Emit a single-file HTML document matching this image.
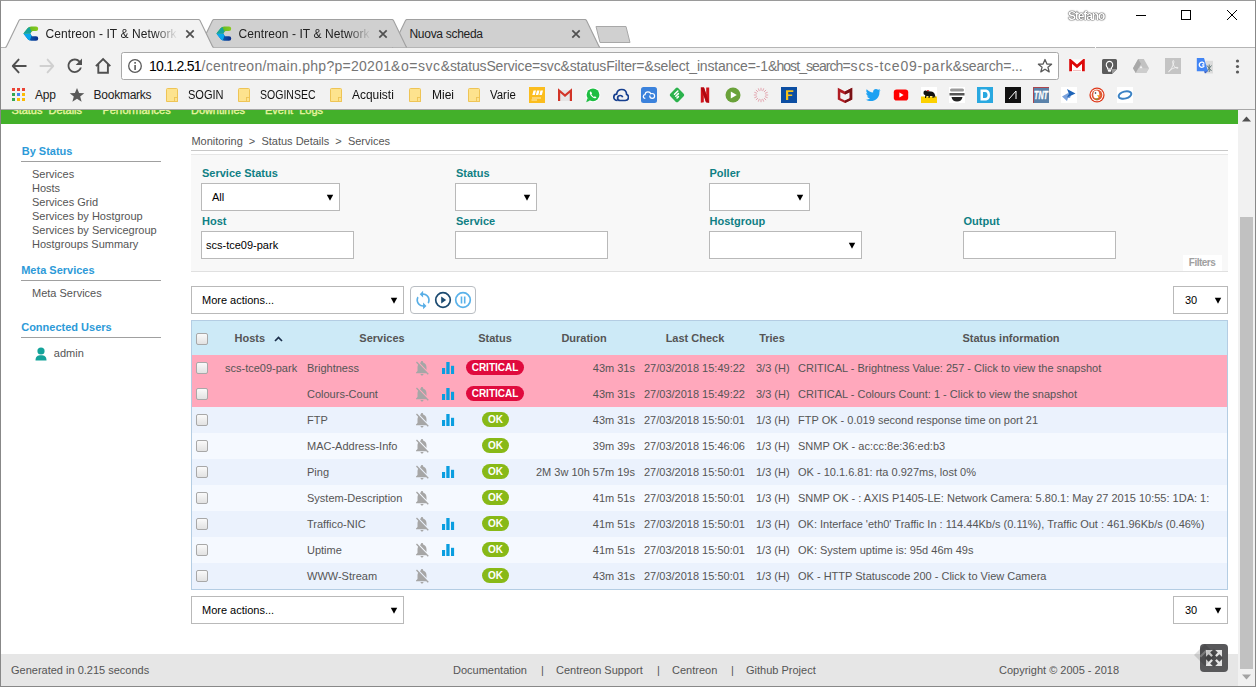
<!DOCTYPE html>
<html><head><meta charset="utf-8"><style>
*{margin:0;padding:0;box-sizing:border-box}
html,body{width:1256px;height:687px;overflow:hidden;background:#fff;font-family:"Liberation Sans",sans-serif}
.a{position:absolute;display:block}
.t{position:absolute;white-space:nowrap;line-height:1}
</style></head><body>
<div class="a" style="left:0px;top:0px;width:1256px;height:47px;background:#fff"></div>
<div class="a" style="left:0px;top:47px;width:1256px;height:63px;background:#f2f2f2"></div>
<div class="a" style="left:0px;top:109px;width:1256px;height:1px;background:#a8a8a8"></div>
<div class="a" style="left:0px;top:47px;width:1256px;height:1px;background:#b5b5b5"></div>
<div class="a" style="left:1095px;top:47px;width:1px;height:1px;background:#fff"></div>
<svg class="a" style="left:0px;top:19px;" width="700" height="30" viewBox="0 0 700 30"><polygon points="392.5,28 406,0.5 586,0.5 599.5,28" fill="#d0d0d0"/><path d="M392,28.2 Q392.8,28 393.2,27 L405.5,1.5 Q406,0.5 407,0.5 L585,0.5 Q586,0.5 586.5,1.5 L598.8,27 Q599.2,28 600,28.2" fill="none" stroke="#a0a0a0" stroke-width="1.1"/><polygon points="199.5,28 213,0.5 393,0.5 406.5,28" fill="#d0d0d0"/><path d="M199,28.2 Q199.8,28 200.2,27 L212.5,1.5 Q213,0.5 214,0.5 L392,0.5 Q393,0.5 393.5,1.5 L405.8,27 Q406.2,28 407,28.2" fill="none" stroke="#a0a0a0" stroke-width="1.1"/><polygon points="6.0,29 19.5,0.5 199.5,0.5 213.0,29" fill="#f2f2f2"/><path d="M5.5,28.2 Q6.300000000000001,28 6.699999999999999,27 L19.0,1.5 Q19.5,0.5 20.5,0.5 L198.5,0.5 Q199.5,0.5 200.0,1.5 L212.3,27 Q212.7,28 213.5,28.2" fill="none" stroke="#a0a0a0" stroke-width="1.1"/><polygon points="596,7.5 626,7.5 630,23.5 600,23.5" fill="#d0d0d0" stroke="#a8a8a8" stroke-width="1" stroke-linejoin="round"/></svg>
<svg class="a" style="left:23px;top:26px;" width="16" height="16" viewBox="0 0 16 16"><defs><clipPath id="cc1"><path d="M0.4 7.6 L4.6 2.2 Q6 0.6 8.2 0.6 L13 0.6 A2.2 2.2 0 0 1 13 5 L10 5 Q9 5 8.4 5.9 L7.4 7.6 L8.4 9.4 Q9 10.3 10 10.3 L13 10.3 A2.25 2.25 0 0 1 13 14.8 L8.2 14.8 Q6 14.8 4.6 13.1 Z"/></clipPath></defs><g clip-path="url(#cc1)"><defs><linearGradient id="cc1g" x1="0" x2="1"><stop offset="0" stop-color="#49b02a"/><stop offset="1" stop-color="#8fcb1a"/></linearGradient><linearGradient id="cc1b" x1="0" x2="1"><stop offset="0" stop-color="#0a78c8"/><stop offset="1" stop-color="#0b2a88"/></linearGradient></defs><rect x="0" y="7.6" width="16" height="9" fill="url(#cc1b)"/><path d="M0 7.6 H16 V0 H0 Z" fill="url(#cc1g)"/><path d="M0 7.6 L7.4 7.6 L8.6 9.6 L6.2 16 L0 16 Z" fill="#08a8ee"/><path d="M0 7.6 L7.4 7.6 L8.6 5.6 L5.8 0 L0 0 Z" fill="#14a39c"/></g></svg>
<svg class="a" style="left:216px;top:26px;" width="16" height="16" viewBox="0 0 16 16"><defs><clipPath id="cc2"><path d="M0.4 7.6 L4.6 2.2 Q6 0.6 8.2 0.6 L13 0.6 A2.2 2.2 0 0 1 13 5 L10 5 Q9 5 8.4 5.9 L7.4 7.6 L8.4 9.4 Q9 10.3 10 10.3 L13 10.3 A2.25 2.25 0 0 1 13 14.8 L8.2 14.8 Q6 14.8 4.6 13.1 Z"/></clipPath></defs><g clip-path="url(#cc2)"><defs><linearGradient id="cc2g" x1="0" x2="1"><stop offset="0" stop-color="#49b02a"/><stop offset="1" stop-color="#8fcb1a"/></linearGradient><linearGradient id="cc2b" x1="0" x2="1"><stop offset="0" stop-color="#0a78c8"/><stop offset="1" stop-color="#0b2a88"/></linearGradient></defs><rect x="0" y="7.6" width="16" height="9" fill="url(#cc2b)"/><path d="M0 7.6 H16 V0 H0 Z" fill="url(#cc2g)"/><path d="M0 7.6 L7.4 7.6 L8.6 9.6 L6.2 16 L0 16 Z" fill="#08a8ee"/><path d="M0 7.6 L7.4 7.6 L8.6 5.6 L5.8 0 L0 0 Z" fill="#14a39c"/></g></svg>
<div class="t " style="left:45.5px;top:28.34px;font-size:12px;color:#222;font-weight:normal;width:132px;overflow:hidden;-webkit-mask-image:linear-gradient(90deg,#000 82%,transparent);letter-spacing:0.084px;">Centreon - IT &amp; Network</div>
<div class="t " style="left:238.5px;top:28.34px;font-size:12px;color:#222;font-weight:normal;width:132px;overflow:hidden;-webkit-mask-image:linear-gradient(90deg,#000 82%,transparent);letter-spacing:0.084px;">Centreon - IT &amp; Network</div>
<div class="t " style="left:409.5px;top:28.34px;font-size:12px;color:#222;font-weight:normal;letter-spacing:-0.292px;">Nuova scheda</div>
<svg class="a" style="left:184px;top:28px;" width="12" height="12" viewBox="0 0 12 12"><path d="M2.3 2.3 L9.7 9.7 M9.7 2.3 L2.3 9.7" stroke="#505050" stroke-width="1.7"/></svg>
<svg class="a" style="left:377px;top:28px;" width="12" height="12" viewBox="0 0 12 12"><path d="M2.3 2.3 L9.7 9.7 M9.7 2.3 L2.3 9.7" stroke="#505050" stroke-width="1.7"/></svg>
<svg class="a" style="left:570px;top:28px;" width="12" height="12" viewBox="0 0 12 12"><path d="M2.3 2.3 L9.7 9.7 M9.7 2.3 L2.3 9.7" stroke="#505050" stroke-width="1.7"/></svg>
<div class="t " style="left:1067.6px;top:10.24px;font-size:12px;color:#fff;font-weight:bold;text-shadow:0 0 1.5px #111,0 0 1px #333;will-change:transform;letter-spacing:-1.117px;">Stefano</div>
<div class="a" style="left:1136px;top:15px;width:10px;height:1px;background:#000"></div>
<div class="a" style="left:1181px;top:10px;width:10px;height:10px;border:1px solid #000"></div>
<svg class="a" style="left:1226px;top:9px;" width="12" height="12" viewBox="0 0 12 12"><path d="M1 1 L11 11 M11 1 L1 11" stroke="#000" stroke-width="1"/></svg>
<svg class="a" style="left:11px;top:58px;" width="16" height="16" viewBox="0 0 16 16"><path d="M14.8 8 H2 M7.6 1.6 L1.8 8 L7.6 14.4" fill="none" stroke="#505050" stroke-width="1.9" stroke-linecap="round" stroke-linejoin="round"/></svg>
<svg class="a" style="left:39px;top:58px;" width="16" height="16" viewBox="0 0 16 16"><path d="M1.4 8 H14 M8.6 1.6 L14.2 8 L8.6 14.4" fill="none" stroke="#d0d0d0" stroke-width="1.9" stroke-linecap="round" stroke-linejoin="round"/></svg>
<svg class="a" style="left:64.4px;top:55.3px" width="21.6" height="21.6" viewBox="0 0 24 24"><path fill="#505050" d="M17.65 6.35C16.2 4.9 14.21 4 12 4c-4.42 0-7.99 3.58-7.99 8s3.57 8 7.99 8c3.73 0 6.84-2.55 7.730-6h-2.08c-.82 2.33-3.04 4-5.65 4-3.310 0-6-2.69-6-6s2.69-6 6-6c1.66 0 3.14.69 4.220 1.78L13 11h7V4l-2.35 2.35z"/></svg>
<svg class="a" style="left:95px;top:57px;" width="17" height="17" viewBox="0 0 17 17"><path d="M0.9 9.2 L8.1 2 L15.3 9.2 M3.3 7 V15.7 H12.9 V7" fill="none" stroke="#505050" stroke-width="1.9"/></svg>
<div class="a" style="left:121px;top:52px;width:938px;height:28px;background:#fff;border:1px solid #a8a8a8;border-radius:2.5px"></div>
<svg class="a" style="left:127px;top:58px;" width="16" height="16" viewBox="0 0 16 16"><circle cx="8" cy="8" r="6.3" fill="none" stroke="#5a5a5a" stroke-width="1.3"/><rect x="7.3" y="7" width="1.6" height="5" fill="#5a5a5a"/><rect x="7.3" y="4" width="1.6" height="1.7" fill="#5a5a5a"/></svg>
<div class="t " style="left:149px;top:59.15px;font-size:14px;color:#000;font-weight:normal;letter-spacing:-0.723px;">10.1.2.51</div>
<div class="t " style="left:201.6px;top:59.15px;font-size:14px;color:#757575;font-weight:normal;letter-spacing:0.275px;">/centreon/main.php?p=20201</div>
<div class="t " style="left:391px;top:59.15px;font-size:14px;color:#757575;font-weight:normal;letter-spacing:0.560px;">&amp;o=svc&amp;</div>
<div class="t " style="left:450px;top:59.15px;font-size:14px;color:#757575;font-weight:normal;letter-spacing:-0.156px;">statusService=svc&amp;statusFilter=</div>
<div class="t " style="left:644.5px;top:59.15px;font-size:14px;color:#757575;font-weight:normal;letter-spacing:-0.165px;">&amp;select_instance=-1</div>
<div class="t " style="left:768px;top:59.15px;font-size:14px;color:#757575;font-weight:normal;letter-spacing:-0.932px;">&amp;host_search=</div>
<div class="t " style="left:850.6px;top:59.15px;font-size:14px;color:#757575;font-weight:normal;letter-spacing:0.784px;">scs-tce09-park</div>
<div class="t " style="left:952.7px;top:59.15px;font-size:14px;color:#757575;font-weight:normal;letter-spacing:-0.120px;">&amp;search=...</div>
<svg class="a" style="left:1037px;top:58px;" width="16" height="16" viewBox="0 0 16 16"><path d="M8 1.5 L9.9 6 L14.6 6.2 L10.9 9.2 L12.2 13.9 L8 11.2 L3.8 13.9 L5.1 9.2 L1.4 6.2 L6.1 6 Z" fill="none" stroke="#5a5a5a" stroke-width="1.3" stroke-linejoin="round"/></svg>
<svg class="a" style="left:1069px;top:59px;" width="16" height="13" viewBox="0 0 16 13"><rect x="1" y="0.5" width="14" height="12" fill="#fff"/><path d="M1.6 12.3 V1.8 L8 7.3 L14.4 1.8 V12.3" fill="none" stroke="#dd0a0a" stroke-width="2.8" stroke-linejoin="miter"/><path d="M4 11.5 H12" stroke="#f0b0b0" stroke-width="0.8"/></svg>
<svg class="a" style="left:1102px;top:59px;" width="15" height="15" viewBox="0 0 15 15"><path d="M1.5 0 H13.5 A1.5 1.5 0 0 1 15 1.5 V10 L10 15 H1.5 A1.5 1.5 0 0 1 0 13.5 V1.5 A1.5 1.5 0 0 1 1.5 0 Z" fill="#5c5c5c"/><path d="M10 15 V10 H15 Z" fill="#9a9a9a"/><path d="M5.6 8.6 C4 7.5 3.8 4.8 5.2 3.3 C6.4 2 8.6 2 9.8 3.3 C11.2 4.8 11 7.5 9.4 8.6 V10 H5.6 Z" fill="none" stroke="#fff" stroke-width="1.1"/><rect x="5.8" y="10.6" width="3.4" height="2.2" rx="1" fill="#fff"/></svg>
<svg class="a" style="left:1133px;top:59px;" width="16" height="14" viewBox="0 0 16 14"><path d="M5.2 0 H10.8 L16 9.2 L13.2 14 H2.8 L0 9.2 Z" fill="#c2c2c2"/><path d="M5.2 0 L8 4.8 L2.8 14 L0 9.2 Z" fill="#a8a8a8"/><path d="M2.8 14 L5.6 9.2 H16 L13.2 14 Z" fill="#cdcdcd"/><path d="M8 6.5 L9.6 9.2 H6.4 Z" fill="#f2f2f2"/></svg>
<svg class="a" style="left:1165px;top:58px;" width="16" height="16" viewBox="0 0 16 16"><rect width="16" height="16" fill="#c4c4c4"/><path d="M8.3 2.5 C7.6 2.5 7.5 3.5 7.8 5 C8.3 7.5 10 10 12.5 10.3 C13.6 10.4 13.3 9.2 12 9.3 C9.5 9.5 6 11 4 13 C3.2 13.8 3.6 14.2 4.3 13.5 C6 11.5 8 8 8.8 4.5 C9 3.2 8.8 2.5 8.3 2.5 Z" fill="none" stroke="#f0f0f0" stroke-width="0.9"/></svg>
<svg class="a" style="left:1196px;top:58px;" width="18" height="16" viewBox="0 0 18 16"><rect x="9.5" y="2.8" width="7.5" height="12.7" fill="#dcdcdc"/><path d="M11 7.5 L15.5 13 M15.5 7.5 L11 13 M13.2 6.5 V14" stroke="#607878" stroke-width="1"/><path d="M0.8 0 H8 L12 13.2 H0.8 Z" fill="#4285f4"/><path d="M8 13.2 H12 L9 15.6 Z" fill="#2a56c6"/><path d="M8.2 5.6 A2.6 2.6 0 1 0 8.2 7.8 M6 6.8 H8.4" fill="none" stroke="#fff" stroke-width="1.3"/></svg>
<svg class="a" style="left:1235px;top:59px;" width="5" height="15" viewBox="0 0 5 15"><circle cx="2.5" cy="2" r="1.6" fill="#5a5a5a"/><circle cx="2.5" cy="7.5" r="1.6" fill="#5a5a5a"/><circle cx="2.5" cy="13" r="1.6" fill="#5a5a5a"/></svg>
<svg class="a" style="left:12px;top:88px;" width="14" height="14" viewBox="0 0 14 14"><rect x="0" y="0" width="3" height="3" fill="#ea4335"/><rect x="5" y="0" width="3" height="3" fill="#ea4335"/><rect x="10" y="0" width="3" height="3" fill="#ea4335"/><rect x="0" y="5" width="3" height="3" fill="#34a853"/><rect x="5" y="5" width="3" height="3" fill="#4285f4"/><rect x="10" y="5" width="3" height="3" fill="#fbbc05"/><rect x="0" y="10" width="3" height="3" fill="#34a853"/><rect x="5" y="10" width="3" height="3" fill="#fbbc05"/><rect x="10" y="10" width="3" height="3" fill="#fbbc05"/></svg>
<div class="t " style="left:35px;top:89.34px;font-size:12px;color:#222;font-weight:normal;letter-spacing:-0.176px;">App</div>
<svg class="a" style="left:69px;top:87px;" width="16" height="16" viewBox="0 0 16 16"><path d="M8 1 L10.1 6 L15.3 6.2 L11.2 9.5 L12.6 14.7 L8 11.8 L3.4 14.7 L4.8 9.5 L0.7 6.2 L5.9 6 Z" fill="#5a5a5a"/></svg>
<div class="t " style="left:93.6px;top:89.34px;font-size:12px;color:#222;font-weight:normal;letter-spacing:-0.252px;">Bookmarks</div>
<svg class="a" style="left:166px;top:88px;" width="13" height="14" viewBox="0 0 13 14"><path d="M0.5 1.5 Q0.5 0.5 1.5 0.5 H10.5 Q11.5 0.5 11.5 1.5 V13.5 H0.5 Z" fill="#fde38e" stroke="#eec455" stroke-width="1"/><rect x="8.5" y="9.5" width="3" height="4" fill="#fde38e" stroke="#eec455" stroke-width="0.9"/></svg>
<div class="t " style="left:187.8px;top:89.34px;font-size:12px;color:#111;font-weight:normal;transform:scaleX(0.9205);transform-origin:0 0;">SOGIN</div>
<svg class="a" style="left:238px;top:88px;" width="13" height="14" viewBox="0 0 13 14"><path d="M0.5 1.5 Q0.5 0.5 1.5 0.5 H10.5 Q11.5 0.5 11.5 1.5 V13.5 H0.5 Z" fill="#fde38e" stroke="#eec455" stroke-width="1"/><rect x="8.5" y="9.5" width="3" height="4" fill="#fde38e" stroke="#eec455" stroke-width="0.9"/></svg>
<div class="t " style="left:260px;top:89.34px;font-size:12px;color:#111;font-weight:normal;transform:scaleX(0.8777);transform-origin:0 0;">SOGINSEC</div>
<svg class="a" style="left:330px;top:88px;" width="13" height="14" viewBox="0 0 13 14"><path d="M0.5 1.5 Q0.5 0.5 1.5 0.5 H10.5 Q11.5 0.5 11.5 1.5 V13.5 H0.5 Z" fill="#fde38e" stroke="#eec455" stroke-width="1"/><rect x="8.5" y="9.5" width="3" height="4" fill="#fde38e" stroke="#eec455" stroke-width="0.9"/></svg>
<div class="t " style="left:352.1px;top:89.34px;font-size:12px;color:#111;font-weight:normal;transform:scaleX(0.9948);transform-origin:0 0;">Acquisti</div>
<svg class="a" style="left:409px;top:88px;" width="13" height="14" viewBox="0 0 13 14"><path d="M0.5 1.5 Q0.5 0.5 1.5 0.5 H10.5 Q11.5 0.5 11.5 1.5 V13.5 H0.5 Z" fill="#fde38e" stroke="#eec455" stroke-width="1"/><rect x="8.5" y="9.5" width="3" height="4" fill="#fde38e" stroke="#eec455" stroke-width="0.9"/></svg>
<div class="t " style="left:431.7px;top:89.34px;font-size:12px;color:#111;font-weight:normal;transform:scaleX(0.9999);transform-origin:0 0;">Miei</div>
<svg class="a" style="left:468px;top:88px;" width="13" height="14" viewBox="0 0 13 14"><path d="M0.5 1.5 Q0.5 0.5 1.5 0.5 H10.5 Q11.5 0.5 11.5 1.5 V13.5 H0.5 Z" fill="#fde38e" stroke="#eec455" stroke-width="1"/><rect x="8.5" y="9.5" width="3" height="4" fill="#fde38e" stroke="#eec455" stroke-width="0.9"/></svg>
<div class="t " style="left:490.2px;top:89.34px;font-size:12px;color:#111;font-weight:normal;transform:scaleX(0.9512);transform-origin:0 0;">Varie</div>
<svg class="a" style="left:529px;top:87px;" width="16" height="16" viewBox="0 0 16 16"><rect width="16" height="16" fill="#fbbd1e"/><path d="M4.5 3.5 H7 L5.8 8 H3.3 Z M8 3.5 H10.5 L9.3 8 H6.8 Z M11.5 3.5 H14 L12.8 8 H10.3 Z" fill="#fff"/><path d="M3 11 H12 M2.5 13 H8" stroke="#fff" stroke-width="0.9" opacity="0.8"/></svg>
<svg class="a" style="left:557px;top:87px;" width="16" height="16" viewBox="0 0 16 16"><rect x="1" y="3" width="14" height="11" fill="#e6e6e6"/><path d="M2.1 14 V3.5 L8 8.5 L13.9 3.5 V14" fill="none" stroke="#d23427" stroke-width="2.2"/></svg>
<svg class="a" style="left:585px;top:87px;" width="16" height="16" viewBox="0 0 16 16"><circle cx="8" cy="7.8" r="7.4" fill="#fff"/><circle cx="8" cy="7.8" r="6.4" fill="#1ebe42"/><path d="M1.2 15.2 L2.6 11 L5 13.6 Z" fill="#1ebe42"/><path d="M5.2 4.6 C4.6 5.2 4.6 6.6 5.6 8.2 C6.6 9.8 8.4 11 9.8 11.2 C10.6 11.3 11.3 10.8 11.4 10.2 L9.8 9.2 L9 9.9 C8 9.5 6.8 8.4 6.4 7.3 L7.1 6.5 L6.2 4.7 Z" fill="#fff"/></svg>
<svg class="a" style="left:613px;top:87px;" width="16" height="16" viewBox="0 0 16 16"><path d="M4.5 13.5 C2 13.5 0.8 11.8 0.8 10.2 C0.8 8.5 2 7.3 3.6 7.2 C4 4.2 6.2 2.5 8.8 2.5 C11.6 2.5 13.5 4.6 13.6 7.4 C15 7.8 15.5 9 15.5 10.3 C15.5 12 14.2 13.5 12.2 13.5 H7.2 C5.6 13.5 4.6 12.4 4.6 11 C4.6 9.6 5.8 8.5 7.2 8.5 C8.4 8.5 9.4 9.3 9.7 10.3" fill="none" stroke="#163f8f" stroke-width="1.7"/></svg>
<svg class="a" style="left:641px;top:87px;" width="16" height="16" viewBox="0 0 16 16"><rect width="16" height="16" rx="2.5" fill="#3b82dc"/><path d="M4.3 11.3 C2.8 11.3 2.3 10.2 2.3 9.5 C2.3 8.5 3 7.8 4 7.7 C4.2 5.8 5.5 4.8 7 4.8 C8.4 4.8 9.4 5.6 9.8 6.8 C10.2 6.6 10.6 6.5 11 6.5 C12.4 6.5 13.6 7.6 13.6 9 C13.6 10.3 12.5 11.3 11.2 11.3 C9.8 11.3 8.8 10.2 8.8 9 V8.5" fill="none" stroke="#fff" stroke-width="1.2"/></svg>
<svg class="a" style="left:669px;top:87px;" width="16" height="16" viewBox="0 0 16 16"><path d="M8 0.6 Q8.6 0.6 9.1 1.1 L14.9 6.9 Q15.5 8 14.9 9.1 L9.1 14.9 Q8 15.6 6.9 14.9 L1.1 9.1 Q0.4 8 1.1 6.9 L6.9 1.1 Q7.4 0.6 8 0.6 Z" fill="#2bb24c"/><path d="M5.5 7.3 L8.8 4 M6.8 9.2 L9.4 6.6 M8 11 L9.4 9.6" stroke="#fff" stroke-width="1.5" stroke-linecap="round"/></svg>
<svg class="a" style="left:697px;top:87px;" width="16" height="16" viewBox="0 0 16 16"><path d="M3.8 0.5 H7 L9.2 7.5 V0.5 H12.2 V15.8 L9 15.2 L6.8 8.2 V15.2 L3.8 15.8 Z" fill="#d0121b"/><path d="M3.8 0.5 H7 L12.2 15.8 L9 15.2 Z" fill="#b00710"/></svg>
<svg class="a" style="left:725px;top:87px;" width="16" height="16" viewBox="0 0 16 16"><circle cx="8" cy="8" r="7.5" fill="#6aa23a"/><path d="M5.8 4.6 L11.8 8 L5.8 11.4 Z" fill="#fff"/></svg>
<svg class="a" style="left:753px;top:87px;" width="16" height="16" viewBox="0 0 16 16"><g stroke="#d87080" stroke-width="0.8" opacity="0.75"><path d="M12.20 8.00 L15.20 8.00"/><path d="M11.88 9.61 L14.65 10.76"/><path d="M10.97 10.97 L13.09 13.09"/><path d="M9.61 11.88 L10.76 14.65"/><path d="M8.00 12.20 L8.00 15.20"/><path d="M6.39 11.88 L5.24 14.65"/><path d="M5.03 10.97 L2.91 13.09"/><path d="M4.12 9.61 L1.35 10.76"/><path d="M3.80 8.00 L0.80 8.00"/><path d="M4.12 6.39 L1.35 5.24"/><path d="M5.03 5.03 L2.91 2.91"/><path d="M6.39 4.12 L5.24 1.35"/><path d="M8.00 3.80 L8.00 0.80"/><path d="M9.61 4.12 L10.76 1.35"/><path d="M10.97 5.03 L13.09 2.91"/><path d="M11.88 6.39 L14.65 5.24"/></g></svg>
<svg class="a" style="left:781px;top:87px;" width="16" height="16" viewBox="0 0 16 16"><rect width="16" height="16" fill="#0c4ea2"/><path d="M5 3.2 H12.3 V5 H7.2 V7.4 H11.2 V9.1 H7.2 V13 H5 Z" fill="#f7c21a"/></svg>
<svg class="a" style="left:837px;top:87px;" width="16" height="16" viewBox="0 0 16 16"><path fill-rule="evenodd" d="M0.8 0.8 L8 4.6 L15.2 0.8 V12.6 L8 16 L0.8 12.6 Z M3.3 5.2 V11.2 L8 13.4 L12.7 11.2 V5.2 L8 7.6 Z" fill="#b01c22"/><path fill-rule="evenodd" d="M8 4.6 L15.2 0.8 V12.6 L8 16 V13.4 L12.7 11.2 V5.2 L8 7.6 Z" fill="#7a1216"/></svg>
<svg class="a" style="left:865px;top:87px;" width="16" height="16" viewBox="0 0 16 16"><path d="M15.5 3.2 C15 3.5 14.3 3.6 13.8 3.7 C14.4 3.3 14.8 2.8 15 2.1 C14.4 2.5 13.8 2.7 13.1 2.8 C11.9 1.5 9.8 1.6 8.7 3 C8.1 3.8 8 4.8 8.2 5.6 C5.6 5.5 3.4 4.3 1.7 2.3 C0.9 3.7 1.3 5.5 2.6 6.4 C2.1 6.4 1.6 6.2 1.2 6 C1.2 7.5 2.2 8.8 3.6 9.1 C3.2 9.3 2.7 9.3 2.2 9.2 C2.6 10.5 3.8 11.3 5.2 11.3 C4 12.3 2.3 12.8 0.6 12.6 C7 16.5 15 12.5 14.4 4.6 C14.9 4.2 15.3 3.7 15.5 3.2 Z" fill="#1da1f2"/></svg>
<svg class="a" style="left:893px;top:87px;" width="16" height="16" viewBox="0 0 16 16"><rect x="0.8" y="2.5" width="14.4" height="11" rx="2.8" fill="#f00"/><path d="M6.4 5.4 L10.6 8 L6.4 10.6 Z" fill="#fff"/></svg>
<svg class="a" style="left:921px;top:87px;" width="16" height="16" viewBox="0 0 16 16"><rect width="16" height="16" fill="#fff"/><rect y="9.5" width="16" height="6.5" fill="#fcd100"/><path d="M2.5 6 C2.5 3.5 4.5 3 5.5 4 L10 4.5 C12 4.5 13.5 6 14 8 L14.5 10.5 L13.5 10.5 L13 9 L12.5 11 L11.5 11 L11.5 9 L9 9 L8.5 11 L7.5 11 L7.5 9 L5.5 9 L5 11 L4 11 L4.2 8 C3 8 2.5 7 2.5 6 Z" fill="#111"/><path d="M5.5 3.5 C6.5 2.5 8 2.8 8.5 3.8 L6 4.2 Z" fill="#e02020"/></svg>
<svg class="a" style="left:949px;top:87px;" width="16" height="16" viewBox="0 0 16 16"><rect width="16" height="16" fill="#fff"/><rect x="1" y="1.5" width="14" height="3" rx="1.5" fill="#999"/><rect x="0.5" y="6" width="15" height="2.5" fill="#555"/><path d="M2.5 10 H13.5 C13 13 11 14.5 8 14.5 C5 14.5 3 13 2.5 10 Z" fill="#222"/></svg>
<svg class="a" style="left:977px;top:87px;" width="16" height="16" viewBox="0 0 16 16"><rect width="16" height="16" fill="#fff"/><rect x="0" y="0" width="16" height="16" fill="#29a8e0"/><path d="M3.5 2.5 H8 C12 2.5 13 5 13 8 C13 11 12 13.5 8 13.5 H3.5 Z M6 5 V11 H8 C10 11 10.5 9.5 10.5 8 C10.5 6.5 10 5 8 5 Z" fill="#fff" fill-rule="evenodd"/></svg>
<svg class="a" style="left:1005px;top:87px;" width="16" height="16" viewBox="0 0 16 16"><rect width="16" height="16" fill="#111"/><path d="M4 12 L11 4 V12" fill="none" stroke="#fff" stroke-width="1"/></svg>
<svg class="a" style="left:1033px;top:87px;" width="16" height="16" viewBox="0 0 16 16"><rect x="0" y="0" width="16" height="16" fill="#5a82aa"/><path d="M0.4 16 V0.4 H16" fill="none" stroke="#c03838" stroke-width="0.9"/><text x="1" y="12.3" font-size="10" font-weight="bold" font-style="italic" fill="#fff" stroke="#fff" stroke-width="0.3" font-family="Liberation Sans" textLength="14" lengthAdjust="spacingAndGlyphs">TNT</text></svg>
<svg class="a" style="left:1061px;top:87px;" width="16" height="16" viewBox="0 0 16 16"><rect width="16" height="16" fill="#fff"/><path d="M1 9.5 L8 5.5 L7 8.5 L10 8.5 L9 11 L7 11 L6 14 Z" fill="#7aa2dc"/><path d="M6 2 L14.5 6.5 L6 10.5 L7.8 6.5 Z" fill="#1e64b8"/></svg>
<svg class="a" style="left:1089px;top:87px;" width="16" height="16" viewBox="0 0 16 16"><circle cx="8" cy="8" r="7.6" fill="#de3a1c"/><circle cx="8" cy="8" r="6.3" fill="#fff"/><circle cx="8" cy="8" r="5.4" fill="#de5833"/><ellipse cx="7.3" cy="7.5" rx="3" ry="4" fill="#fff"/><circle cx="6.5" cy="6" r="0.8" fill="#222"/><path d="M8 8 L12 8.5 L9.5 10.5 Z" fill="#f5a623"/><path d="M6 11.5 L9.5 11.5 L8 13 Z" fill="#5cb02a"/></svg>
<svg class="a" style="left:1117px;top:87px;" width="16" height="16" viewBox="0 0 16 16"><rect width="16" height="16" fill="#fff"/><ellipse cx="8" cy="8" rx="6.5" ry="3.5" fill="none" stroke="#3b82c4" stroke-width="2" transform="rotate(-15 8 8)"/></svg>
<div class="a" style="left:0px;top:110px;width:1238px;height:14px;background:#43b02a"></div>
<div class="a" style="left:0;top:110px;width:1238px;height:14px;overflow:hidden">
<div class="t" style="left:11.4px;top:-5.31px;font-size:11px;color:#e8f5a0;-webkit-text-stroke:0.35px #e8f5a0;letter-spacing:-0.023px">Status&nbsp; Details</div>
<div class="t" style="left:102.4px;top:-5.31px;font-size:11px;color:#e8f5a0;-webkit-text-stroke:0.35px #e8f5a0;letter-spacing:-0.015px">Performances</div>
<div class="t" style="left:191px;top:-5.31px;font-size:11px;color:#e8f5a0;-webkit-text-stroke:0.35px #e8f5a0;letter-spacing:-0.050px">Downtimes</div>
<div class="t" style="left:265px;top:-5.31px;font-size:11px;color:#e8f5a0;-webkit-text-stroke:0.35px #e8f5a0;letter-spacing:-0.009px">Event&nbsp; Logs</div>
</div>
<div class="a" style="left:1238px;top:110px;width:17px;height:576px;background:#f1f1f1"></div>
<div class="a" style="left:1240px;top:217px;width:13px;height:452px;background:#c1c1c1"></div>
<svg class="a" style="left:1241px;top:115px;" width="11" height="8" viewBox="0 0 11 8"><path d="M1 6.5 L5.5 1.5 L10 6.5 Z" fill="#505050"/></svg>
<svg class="a" style="left:1241px;top:673px;" width="11" height="8" viewBox="0 0 11 8"><path d="M1 1.5 L5.5 6.5 L10 1.5 Z" fill="#a3a3a3"/></svg>
<div class="t " style="left:21.7px;top:145.99px;font-size:11px;color:#2d9ad8;font-weight:bold;">By Status</div>
<div class="a" style="left:21px;top:161px;width:140px;height:1px;background:#a0a0a0"></div>
<div class="t " style="left:32px;top:168.69px;font-size:11px;color:#555;font-weight:normal;">Services</div>
<div class="t " style="left:32px;top:182.69px;font-size:11px;color:#555;font-weight:normal;">Hosts</div>
<div class="t " style="left:32px;top:196.69px;font-size:11px;color:#555;font-weight:normal;">Services Grid</div>
<div class="t " style="left:32px;top:210.69px;font-size:11px;color:#555;font-weight:normal;">Services by Hostgroup</div>
<div class="t " style="left:32px;top:224.69px;font-size:11px;color:#555;font-weight:normal;">Services by Servicegroup</div>
<div class="t " style="left:32px;top:238.69px;font-size:11px;color:#555;font-weight:normal;">Hostgroups Summary</div>
<div class="t " style="left:21.2px;top:264.89px;font-size:11px;color:#2d9ad8;font-weight:bold;">Meta Services</div>
<div class="a" style="left:21px;top:280px;width:140px;height:1px;background:#a0a0a0"></div>
<div class="t " style="left:32px;top:287.69px;font-size:11px;color:#555;font-weight:normal;">Meta Services</div>
<div class="t " style="left:21.2px;top:321.69px;font-size:11px;color:#2d9ad8;font-weight:bold;">Connected Users</div>
<div class="a" style="left:21px;top:337px;width:140px;height:1px;background:#a0a0a0"></div>
<svg class="a" style="left:35px;top:347px;" width="12" height="14" viewBox="0 0 12 14"><circle cx="6" cy="4" r="3.6" fill="#14a39a"/><path d="M0.5 13.5 C0.5 9.5 2.5 8.2 6 8.2 C9.5 8.2 11.5 9.5 11.5 13.5 Z" fill="#14a39a"/></svg>
<div class="t " style="left:53.8px;top:347.69px;font-size:11px;color:#555;font-weight:normal;">admin</div>
<div class="t " style="left:191.4px;top:135.69px;font-size:11px;color:#555;font-weight:normal;">Monitoring&nbsp; &gt;&nbsp; Status Details&nbsp; &gt;&nbsp; Services</div>
<div class="a" style="left:191px;top:150px;width:1037px;height:1px;background:#c8c8c8"></div>
<div class="a" style="left:191px;top:154px;width:1037px;height:118px;background:#f8f8f8;border-top:1px solid #e6e6e6;border-bottom:1px solid #e0e0e0"></div>
<div class="t " style="left:202px;top:167.69px;font-size:11px;color:#0f7f84;font-weight:bold;">Service Status</div>
<div class="a" style="left:201px;top:183px;width:139px;height:28px;background:#fff;border:1px solid #b9b9b9"></div>
<svg class="a" style="left:325.5px;top:193.5px;" width="8" height="7" viewBox="0 0 8 7"><path d="M0.8 0.8 L7.2 0.8 L4 6.8 Z" fill="#000"/></svg>
<div class="t " style="left:212px;top:191.69px;font-size:11px;color:#000;font-weight:normal;">All</div>
<div class="t " style="left:456px;top:167.69px;font-size:11px;color:#0f7f84;font-weight:bold;">Status</div>
<div class="a" style="left:455px;top:183px;width:82px;height:28px;background:#fff;border:1px solid #b9b9b9"></div>
<svg class="a" style="left:523px;top:193.5px;" width="8" height="7" viewBox="0 0 8 7"><path d="M0.8 0.8 L7.2 0.8 L4 6.8 Z" fill="#000"/></svg>
<div class="t " style="left:709.5px;top:167.69px;font-size:11px;color:#0f7f84;font-weight:bold;">Poller</div>
<div class="a" style="left:709px;top:183px;width:101px;height:28px;background:#fff;border:1px solid #b9b9b9"></div>
<svg class="a" style="left:796px;top:193.5px;" width="8" height="7" viewBox="0 0 8 7"><path d="M0.8 0.8 L7.2 0.8 L4 6.8 Z" fill="#000"/></svg>
<div class="t " style="left:202px;top:215.69px;font-size:11px;color:#0f7f84;font-weight:bold;">Host</div>
<div class="a" style="left:201px;top:231px;width:153px;height:28px;background:#fff;border:1px solid #b9b9b9"></div>
<div class="t " style="left:206px;top:240.19px;font-size:11px;color:#000;font-weight:normal;">scs-tce09-park</div>
<div class="t " style="left:456px;top:215.69px;font-size:11px;color:#0f7f84;font-weight:bold;">Service</div>
<div class="a" style="left:455px;top:231px;width:153px;height:28px;background:#fff;border:1px solid #b9b9b9"></div>
<div class="t " style="left:709.5px;top:215.69px;font-size:11px;color:#0f7f84;font-weight:bold;">Hostgroup</div>
<div class="a" style="left:709px;top:231px;width:153px;height:28px;background:#fff;border:1px solid #b9b9b9"></div>
<svg class="a" style="left:848px;top:241.5px;" width="8" height="7" viewBox="0 0 8 7"><path d="M0.8 0.8 L7.2 0.8 L4 6.8 Z" fill="#000"/></svg>
<div class="t " style="left:963.5px;top:215.69px;font-size:11px;color:#0f7f84;font-weight:bold;">Output</div>
<div class="a" style="left:963px;top:231px;width:153px;height:28px;background:#fff;border:1px solid #b9b9b9"></div>
<div class="a" style="left:1183px;top:255px;width:39px;height:16px;background:#fff"></div>
<div class="t " style="left:1188.8px;top:257.54px;font-size:10px;color:#a0a0a0;font-weight:bold;letter-spacing:-0.501px;">Filters</div>
<div class="a" style="left:191px;top:286px;width:213px;height:28px;background:#fff;border:1px solid #b9b9b9"></div>
<div class="t " style="left:202px;top:294.69px;font-size:11px;color:#000;font-weight:normal;">More actions...</div>
<svg class="a" style="left:389.5px;top:296.5px;" width="8" height="7" viewBox="0 0 8 7"><path d="M0.8 0.8 L7.2 0.8 L4 6.8 Z" fill="#000"/></svg>
<div class="a" style="left:1173px;top:286px;width:55px;height:28px;background:#fff;border:1px solid #b9b9b9"></div>
<div class="t " style="left:1185px;top:295.19px;font-size:11px;color:#000;font-weight:normal;">30</div>
<svg class="a" style="left:1213.5px;top:296.5px;" width="8" height="7" viewBox="0 0 8 7"><path d="M0.8 0.8 L7.2 0.8 L4 6.8 Z" fill="#000"/></svg>
<div class="a" style="left:191px;top:596px;width:213px;height:28px;background:#fff;border:1px solid #b9b9b9"></div>
<div class="t " style="left:202px;top:604.69px;font-size:11px;color:#000;font-weight:normal;">More actions...</div>
<svg class="a" style="left:389.5px;top:606.5px;" width="8" height="7" viewBox="0 0 8 7"><path d="M0.8 0.8 L7.2 0.8 L4 6.8 Z" fill="#000"/></svg>
<div class="a" style="left:1173px;top:596px;width:55px;height:28px;background:#fff;border:1px solid #b9b9b9"></div>
<div class="t " style="left:1185px;top:605.19px;font-size:11px;color:#000;font-weight:normal;">30</div>
<svg class="a" style="left:1213.5px;top:606.5px;" width="8" height="7" viewBox="0 0 8 7"><path d="M0.8 0.8 L7.2 0.8 L4 6.8 Z" fill="#000"/></svg>
<div class="a" style="left:410px;top:286px;width:66px;height:28px;background:#fff;border:1px solid #b9bdc2;border-radius:4px"></div>
<svg class="a" style="left:412.6px;top:289.9px" width="20.2" height="20.2" viewBox="0 0 24 24"><path fill="#58aee6" d="M12 4V1L8 5l4 4V6c3.31 0 6 2.69 6 6 0 1.01-.25 1.97-.7 2.8l1.46 1.46C19.54 15.03 20 13.57 20 12c0-4.42-3.58-8-8-8zm0 14c-3.31 0-6-2.69-6-6 0-1.01.25-1.97.7-2.8L5.24 7.74C4.46 8.97 4 10.43 4 12c0 4.42 3.58 8 8 8v3l4-4-4-4v3z"/></svg>
<svg class="a" style="left:434px;top:291px;" width="18" height="18" viewBox="0 0 18 18"><circle cx="9" cy="9" r="7.3" fill="none" stroke="#1b4a70" stroke-width="1.7"/><path d="M7.2 5.6 L12.2 9 L7.2 12.4 Z" fill="#1b4a70"/></svg>
<svg class="a" style="left:454px;top:291px;" width="18" height="18" viewBox="0 0 18 18"><circle cx="9" cy="9" r="7.3" fill="none" stroke="#5ab2ea" stroke-width="1.7"/><rect x="6.7" y="5.5" width="1.6" height="7" fill="#5ab2ea"/><rect x="9.9" y="5.5" width="1.6" height="7" fill="#5ab2ea"/></svg>
<div class="a" style="left:191px;top:320px;width:1037px;height:270px;background:#fff;border:1px solid #b4cde3"></div>
<div class="a" style="left:192px;top:321px;width:1035px;height:34px;background:#cdeaf7"></div>
<div class="a" style="left:196px;top:333px;width:12px;height:12px;border:1px solid #a8a8a8;border-radius:2px;background:linear-gradient(#fafafa,#e2e2e2)"></div>
<div class="t " style="left:234.6px;top:332.69px;font-size:11px;color:#555;font-weight:bold;">Hosts</div>
<div class="t" style="left:82px;width:600px;text-align:center;top:332.69px;font-size:11px;color:#555;font-weight:bold;">Services</div>
<div class="t" style="left:195px;width:600px;text-align:center;top:332.69px;font-size:11px;color:#555;font-weight:bold;">Status</div>
<div class="t" style="left:284px;width:600px;text-align:center;top:332.69px;font-size:11px;color:#555;font-weight:bold;">Duration</div>
<div class="t" style="left:395px;width:600px;text-align:center;top:332.69px;font-size:11px;color:#555;font-weight:bold;">Last Check</div>
<div class="t" style="left:472px;width:600px;text-align:center;top:332.69px;font-size:11px;color:#555;font-weight:bold;">Tries</div>
<div class="t" style="left:711px;width:600px;text-align:center;top:332.69px;font-size:11px;color:#555;font-weight:bold;">Status information</div>
<svg class="a" style="left:273px;top:334px;" width="11" height="9" viewBox="0 0 11 9"><path d="M2 7 L5.5 3.5 L9 7" fill="none" stroke="#1a2e4a" stroke-width="1.7"/></svg>
<div class="a" style="left:192px;top:355px;width:1035px;height:26px;background:#ffa8bc"></div>
<div class="a" style="left:196px;top:362px;width:12px;height:12px;border:1px solid #a8a8a8;border-radius:2px;background:linear-gradient(#fafafa,#e2e2e2)"></div>
<div class="t " style="left:225px;top:362.69px;font-size:11px;color:#555;font-weight:normal;">scs-tce09-park</div>
<div class="t " style="left:307px;top:362.69px;font-size:11px;color:#555;font-weight:normal;">Brightness</div>
<svg class="a" style="left:412.6px;top:358.7px" width="18" height="18" viewBox="0 0 24 24"><path fill="#a6a6a6" d="M20 18.69L7.84 6.14 5.27 3.49 4 4.76l2.8 2.8v.01c-.52.99-.8 2.16-.8 3.42v5l-2 2v1h13.73l2 2L21 19.72l-1-1.03zM12 22c1.11 0 2-.89 2-2h-4c0 1.11.89 2 2 2zm6-7.32V11c0-3.08-1.64-5.64-4.5-6.32V4c0-.83-.67-1.5-1.5-1.5s-1.5.67-1.5 1.5v.68c-.15.03-.29.08-.42.12-.1.03-.2.07-.3.11h-.01c-.01 0-.01 0-.02.01-.23.09-.46.2-.68.31 0 0-.01 0-.01.01L18 14.68z"/></svg>
<svg class="a" style="left:442px;top:362px" width="13" height="12" viewBox="0 0 13 12"><rect x="0" y="6" width="3.1" height="6" fill="#0a9ee0"/><rect x="4.3" y="0" width="3.3" height="12" fill="#0a9ee0"/><rect x="9" y="3.8" width="3.1" height="8.2" fill="#0a9ee0"/></svg>
<div class="a" style="left:466px;top:360px;width:58px;height:15px;background:#e00a3d;border-radius:8px"></div>
<div class="t" style="left:195px;width:600px;text-align:center;top:362.54px;font-size:10px;color:#fff;font-weight:bold;">CRITICAL</div>
<div class="t" style="left:35px;width:600px;text-align:right;top:362.69px;font-size:11px;color:#555;font-weight:normal;">43m 31s</div>
<div class="t " style="left:644px;top:362.69px;font-size:11px;color:#555;font-weight:normal;">27/03/2018 15:49:22</div>
<div class="t " style="left:756px;top:362.69px;font-size:11px;color:#555;font-weight:normal;">3/3 (H)</div>
<div class="t " style="left:798px;top:362.69px;font-size:11px;color:#555;font-weight:normal;">CRITICAL - Brightness Value: 257 - Click to view the snapshot</div>
<div class="a" style="left:192px;top:381px;width:1035px;height:26px;background:#ffa8bc"></div>
<div class="a" style="left:196px;top:388px;width:12px;height:12px;border:1px solid #a8a8a8;border-radius:2px;background:linear-gradient(#fafafa,#e2e2e2)"></div>
<div class="t " style="left:307px;top:388.69px;font-size:11px;color:#555;font-weight:normal;">Colours-Count</div>
<svg class="a" style="left:412.6px;top:384.7px" width="18" height="18" viewBox="0 0 24 24"><path fill="#a6a6a6" d="M20 18.69L7.84 6.14 5.27 3.49 4 4.76l2.8 2.8v.01c-.52.99-.8 2.16-.8 3.42v5l-2 2v1h13.73l2 2L21 19.72l-1-1.03zM12 22c1.11 0 2-.89 2-2h-4c0 1.11.89 2 2 2zm6-7.32V11c0-3.08-1.64-5.64-4.5-6.32V4c0-.83-.67-1.5-1.5-1.5s-1.5.67-1.5 1.5v.68c-.15.03-.29.08-.42.12-.1.03-.2.07-.3.11h-.01c-.01 0-.01 0-.02.01-.23.09-.46.2-.68.31 0 0-.01 0-.01.01L18 14.68z"/></svg>
<svg class="a" style="left:442px;top:388px" width="13" height="12" viewBox="0 0 13 12"><rect x="0" y="6" width="3.1" height="6" fill="#0a9ee0"/><rect x="4.3" y="0" width="3.3" height="12" fill="#0a9ee0"/><rect x="9" y="3.8" width="3.1" height="8.2" fill="#0a9ee0"/></svg>
<div class="a" style="left:466px;top:386px;width:58px;height:15px;background:#e00a3d;border-radius:8px"></div>
<div class="t" style="left:195px;width:600px;text-align:center;top:388.54px;font-size:10px;color:#fff;font-weight:bold;">CRITICAL</div>
<div class="t" style="left:35px;width:600px;text-align:right;top:388.69px;font-size:11px;color:#555;font-weight:normal;">43m 31s</div>
<div class="t " style="left:644px;top:388.69px;font-size:11px;color:#555;font-weight:normal;">27/03/2018 15:49:22</div>
<div class="t " style="left:756px;top:388.69px;font-size:11px;color:#555;font-weight:normal;">3/3 (H)</div>
<div class="t " style="left:798px;top:388.69px;font-size:11px;color:#555;font-weight:normal;">CRITICAL - Colours Count: 1 - Click to view the snapshot</div>
<div class="a" style="left:192px;top:407px;width:1035px;height:26px;background:#ebf2fd"></div>
<div class="a" style="left:196px;top:414px;width:12px;height:12px;border:1px solid #a8a8a8;border-radius:2px;background:linear-gradient(#fafafa,#e2e2e2)"></div>
<div class="t " style="left:307px;top:414.69px;font-size:11px;color:#555;font-weight:normal;">FTP</div>
<svg class="a" style="left:412.6px;top:410.7px" width="18" height="18" viewBox="0 0 24 24"><path fill="#a6a6a6" d="M20 18.69L7.84 6.14 5.27 3.49 4 4.76l2.8 2.8v.01c-.52.99-.8 2.16-.8 3.42v5l-2 2v1h13.73l2 2L21 19.72l-1-1.03zM12 22c1.11 0 2-.89 2-2h-4c0 1.11.89 2 2 2zm6-7.32V11c0-3.08-1.64-5.64-4.5-6.32V4c0-.83-.67-1.5-1.5-1.5s-1.5.67-1.5 1.5v.68c-.15.03-.29.08-.42.12-.1.03-.2.07-.3.11h-.01c-.01 0-.01 0-.02.01-.23.09-.46.2-.68.31 0 0-.01 0-.01.01L18 14.68z"/></svg>
<svg class="a" style="left:442px;top:414px" width="13" height="12" viewBox="0 0 13 12"><rect x="0" y="6" width="3.1" height="6" fill="#0a9ee0"/><rect x="4.3" y="0" width="3.3" height="12" fill="#0a9ee0"/><rect x="9" y="3.8" width="3.1" height="8.2" fill="#0a9ee0"/></svg>
<div class="a" style="left:482px;top:412px;width:27px;height:15px;background:#88b917;border-radius:8px"></div>
<div class="t" style="left:195.5px;width:600px;text-align:center;top:414.54px;font-size:10px;color:#fff;font-weight:bold;">OK</div>
<div class="t" style="left:35px;width:600px;text-align:right;top:414.69px;font-size:11px;color:#555;font-weight:normal;">43m 31s</div>
<div class="t " style="left:644px;top:414.69px;font-size:11px;color:#555;font-weight:normal;">27/03/2018 15:50:01</div>
<div class="t " style="left:756px;top:414.69px;font-size:11px;color:#555;font-weight:normal;">1/3 (H)</div>
<div class="t " style="left:798px;top:414.69px;font-size:11px;color:#555;font-weight:normal;">FTP OK - 0.019 second response time on port 21</div>
<div class="a" style="left:192px;top:433px;width:1035px;height:26px;background:#f5f9ff"></div>
<div class="a" style="left:196px;top:440px;width:12px;height:12px;border:1px solid #a8a8a8;border-radius:2px;background:linear-gradient(#fafafa,#e2e2e2)"></div>
<div class="t " style="left:307px;top:440.69px;font-size:11px;color:#555;font-weight:normal;">MAC-Address-Info</div>
<svg class="a" style="left:412.6px;top:436.7px" width="18" height="18" viewBox="0 0 24 24"><path fill="#a6a6a6" d="M20 18.69L7.84 6.14 5.27 3.49 4 4.76l2.8 2.8v.01c-.52.99-.8 2.16-.8 3.42v5l-2 2v1h13.73l2 2L21 19.72l-1-1.03zM12 22c1.11 0 2-.89 2-2h-4c0 1.11.89 2 2 2zm6-7.32V11c0-3.08-1.64-5.64-4.5-6.32V4c0-.83-.67-1.5-1.5-1.5s-1.5.67-1.5 1.5v.68c-.15.03-.29.08-.42.12-.1.03-.2.07-.3.11h-.01c-.01 0-.01 0-.02.01-.23.09-.46.2-.68.31 0 0-.01 0-.01.01L18 14.68z"/></svg>
<div class="a" style="left:482px;top:438px;width:27px;height:15px;background:#88b917;border-radius:8px"></div>
<div class="t" style="left:195.5px;width:600px;text-align:center;top:440.54px;font-size:10px;color:#fff;font-weight:bold;">OK</div>
<div class="t" style="left:35px;width:600px;text-align:right;top:440.69px;font-size:11px;color:#555;font-weight:normal;">39m 39s</div>
<div class="t " style="left:644px;top:440.69px;font-size:11px;color:#555;font-weight:normal;">27/03/2018 15:46:06</div>
<div class="t " style="left:756px;top:440.69px;font-size:11px;color:#555;font-weight:normal;">1/3 (H)</div>
<div class="t " style="left:798px;top:440.69px;font-size:11px;color:#555;font-weight:normal;">SNMP OK - ac:cc:8e:36:ed:b3</div>
<div class="a" style="left:192px;top:459px;width:1035px;height:26px;background:#ebf2fd"></div>
<div class="a" style="left:196px;top:466px;width:12px;height:12px;border:1px solid #a8a8a8;border-radius:2px;background:linear-gradient(#fafafa,#e2e2e2)"></div>
<div class="t " style="left:307px;top:466.69px;font-size:11px;color:#555;font-weight:normal;">Ping</div>
<svg class="a" style="left:412.6px;top:462.7px" width="18" height="18" viewBox="0 0 24 24"><path fill="#a6a6a6" d="M20 18.69L7.84 6.14 5.27 3.49 4 4.76l2.8 2.8v.01c-.52.99-.8 2.16-.8 3.42v5l-2 2v1h13.73l2 2L21 19.72l-1-1.03zM12 22c1.11 0 2-.89 2-2h-4c0 1.11.89 2 2 2zm6-7.32V11c0-3.08-1.64-5.64-4.5-6.32V4c0-.83-.67-1.5-1.5-1.5s-1.5.67-1.5 1.5v.68c-.15.03-.29.08-.42.12-.1.03-.2.07-.3.11h-.01c-.01 0-.01 0-.02.01-.23.09-.46.2-.68.31 0 0-.01 0-.01.01L18 14.68z"/></svg>
<svg class="a" style="left:442px;top:466px" width="13" height="12" viewBox="0 0 13 12"><rect x="0" y="6" width="3.1" height="6" fill="#0a9ee0"/><rect x="4.3" y="0" width="3.3" height="12" fill="#0a9ee0"/><rect x="9" y="3.8" width="3.1" height="8.2" fill="#0a9ee0"/></svg>
<div class="a" style="left:482px;top:464px;width:27px;height:15px;background:#88b917;border-radius:8px"></div>
<div class="t" style="left:195.5px;width:600px;text-align:center;top:466.54px;font-size:10px;color:#fff;font-weight:bold;">OK</div>
<div class="t" style="left:35px;width:600px;text-align:right;top:466.69px;font-size:11px;color:#555;font-weight:normal;">2M 3w 10h 57m 19s</div>
<div class="t " style="left:644px;top:466.69px;font-size:11px;color:#555;font-weight:normal;">27/03/2018 15:50:01</div>
<div class="t " style="left:756px;top:466.69px;font-size:11px;color:#555;font-weight:normal;">1/3 (H)</div>
<div class="t " style="left:798px;top:466.69px;font-size:11px;color:#555;font-weight:normal;">OK - 10.1.6.81: rta 0.927ms, lost 0%</div>
<div class="a" style="left:192px;top:485px;width:1035px;height:26px;background:#f5f9ff"></div>
<div class="a" style="left:196px;top:492px;width:12px;height:12px;border:1px solid #a8a8a8;border-radius:2px;background:linear-gradient(#fafafa,#e2e2e2)"></div>
<div class="t " style="left:307px;top:492.69px;font-size:11px;color:#555;font-weight:normal;">System-Description</div>
<svg class="a" style="left:412.6px;top:488.7px" width="18" height="18" viewBox="0 0 24 24"><path fill="#a6a6a6" d="M20 18.69L7.84 6.14 5.27 3.49 4 4.76l2.8 2.8v.01c-.52.99-.8 2.16-.8 3.42v5l-2 2v1h13.73l2 2L21 19.72l-1-1.03zM12 22c1.11 0 2-.89 2-2h-4c0 1.11.89 2 2 2zm6-7.32V11c0-3.08-1.64-5.64-4.5-6.32V4c0-.83-.67-1.5-1.5-1.5s-1.5.67-1.5 1.5v.68c-.15.03-.29.08-.42.12-.1.03-.2.07-.3.11h-.01c-.01 0-.01 0-.02.01-.23.09-.46.2-.68.31 0 0-.01 0-.01.01L18 14.68z"/></svg>
<div class="a" style="left:482px;top:490px;width:27px;height:15px;background:#88b917;border-radius:8px"></div>
<div class="t" style="left:195.5px;width:600px;text-align:center;top:492.54px;font-size:10px;color:#fff;font-weight:bold;">OK</div>
<div class="t" style="left:35px;width:600px;text-align:right;top:492.69px;font-size:11px;color:#555;font-weight:normal;">41m 51s</div>
<div class="t " style="left:644px;top:492.69px;font-size:11px;color:#555;font-weight:normal;">27/03/2018 15:50:01</div>
<div class="t " style="left:756px;top:492.69px;font-size:11px;color:#555;font-weight:normal;">1/3 (H)</div>
<div class="t " style="left:798px;top:492.69px;font-size:11px;color:#555;font-weight:normal;">SNMP OK - : AXIS P1405-LE: Network Camera: 5.80.1: May 27 2015 10:55: 1DA: 1:</div>
<div class="a" style="left:192px;top:511px;width:1035px;height:26px;background:#ebf2fd"></div>
<div class="a" style="left:196px;top:518px;width:12px;height:12px;border:1px solid #a8a8a8;border-radius:2px;background:linear-gradient(#fafafa,#e2e2e2)"></div>
<div class="t " style="left:307px;top:518.69px;font-size:11px;color:#555;font-weight:normal;">Traffico-NIC</div>
<svg class="a" style="left:412.6px;top:514.7px" width="18" height="18" viewBox="0 0 24 24"><path fill="#a6a6a6" d="M20 18.69L7.84 6.14 5.27 3.49 4 4.76l2.8 2.8v.01c-.52.99-.8 2.16-.8 3.42v5l-2 2v1h13.73l2 2L21 19.72l-1-1.03zM12 22c1.11 0 2-.89 2-2h-4c0 1.11.89 2 2 2zm6-7.32V11c0-3.08-1.64-5.64-4.5-6.32V4c0-.83-.67-1.5-1.5-1.5s-1.5.67-1.5 1.5v.68c-.15.03-.29.08-.42.12-.1.03-.2.07-.3.11h-.01c-.01 0-.01 0-.02.01-.23.09-.46.2-.68.31 0 0-.01 0-.01.01L18 14.68z"/></svg>
<svg class="a" style="left:442px;top:518px" width="13" height="12" viewBox="0 0 13 12"><rect x="0" y="6" width="3.1" height="6" fill="#0a9ee0"/><rect x="4.3" y="0" width="3.3" height="12" fill="#0a9ee0"/><rect x="9" y="3.8" width="3.1" height="8.2" fill="#0a9ee0"/></svg>
<div class="a" style="left:482px;top:516px;width:27px;height:15px;background:#88b917;border-radius:8px"></div>
<div class="t" style="left:195.5px;width:600px;text-align:center;top:518.53px;font-size:10px;color:#fff;font-weight:bold;">OK</div>
<div class="t" style="left:35px;width:600px;text-align:right;top:518.69px;font-size:11px;color:#555;font-weight:normal;">41m 51s</div>
<div class="t " style="left:644px;top:518.69px;font-size:11px;color:#555;font-weight:normal;">27/03/2018 15:50:01</div>
<div class="t " style="left:756px;top:518.69px;font-size:11px;color:#555;font-weight:normal;">1/3 (H)</div>
<div class="t " style="left:798px;top:518.69px;font-size:11px;color:#555;font-weight:normal;">OK: Interface 'eth0' Traffic In : 114.44Kb/s (0.11%), Traffic Out : 461.96Kb/s (0.46%)</div>
<div class="a" style="left:192px;top:537px;width:1035px;height:26px;background:#f5f9ff"></div>
<div class="a" style="left:196px;top:544px;width:12px;height:12px;border:1px solid #a8a8a8;border-radius:2px;background:linear-gradient(#fafafa,#e2e2e2)"></div>
<div class="t " style="left:307px;top:544.69px;font-size:11px;color:#555;font-weight:normal;">Uptime</div>
<svg class="a" style="left:412.6px;top:540.7px" width="18" height="18" viewBox="0 0 24 24"><path fill="#a6a6a6" d="M20 18.69L7.84 6.14 5.27 3.49 4 4.76l2.8 2.8v.01c-.52.99-.8 2.16-.8 3.42v5l-2 2v1h13.73l2 2L21 19.72l-1-1.03zM12 22c1.11 0 2-.89 2-2h-4c0 1.11.89 2 2 2zm6-7.32V11c0-3.08-1.64-5.64-4.5-6.32V4c0-.83-.67-1.5-1.5-1.5s-1.5.67-1.5 1.5v.68c-.15.03-.29.08-.42.12-.1.03-.2.07-.3.11h-.01c-.01 0-.01 0-.02.01-.23.09-.46.2-.68.31 0 0-.01 0-.01.01L18 14.68z"/></svg>
<svg class="a" style="left:442px;top:544px" width="13" height="12" viewBox="0 0 13 12"><rect x="0" y="6" width="3.1" height="6" fill="#0a9ee0"/><rect x="4.3" y="0" width="3.3" height="12" fill="#0a9ee0"/><rect x="9" y="3.8" width="3.1" height="8.2" fill="#0a9ee0"/></svg>
<div class="a" style="left:482px;top:542px;width:27px;height:15px;background:#88b917;border-radius:8px"></div>
<div class="t" style="left:195.5px;width:600px;text-align:center;top:544.53px;font-size:10px;color:#fff;font-weight:bold;">OK</div>
<div class="t" style="left:35px;width:600px;text-align:right;top:544.69px;font-size:11px;color:#555;font-weight:normal;">41m 51s</div>
<div class="t " style="left:644px;top:544.69px;font-size:11px;color:#555;font-weight:normal;">27/03/2018 15:50:01</div>
<div class="t " style="left:756px;top:544.69px;font-size:11px;color:#555;font-weight:normal;">1/3 (H)</div>
<div class="t " style="left:798px;top:544.69px;font-size:11px;color:#555;font-weight:normal;">OK: System uptime is: 95d 46m 49s</div>
<div class="a" style="left:192px;top:563px;width:1035px;height:26px;background:#ebf2fd"></div>
<div class="a" style="left:196px;top:570px;width:12px;height:12px;border:1px solid #a8a8a8;border-radius:2px;background:linear-gradient(#fafafa,#e2e2e2)"></div>
<div class="t " style="left:307px;top:570.69px;font-size:11px;color:#555;font-weight:normal;">WWW-Stream</div>
<svg class="a" style="left:412.6px;top:566.7px" width="18" height="18" viewBox="0 0 24 24"><path fill="#a6a6a6" d="M20 18.69L7.84 6.14 5.27 3.49 4 4.76l2.8 2.8v.01c-.52.99-.8 2.16-.8 3.42v5l-2 2v1h13.73l2 2L21 19.72l-1-1.03zM12 22c1.11 0 2-.89 2-2h-4c0 1.11.89 2 2 2zm6-7.32V11c0-3.08-1.64-5.64-4.5-6.32V4c0-.83-.67-1.5-1.5-1.5s-1.5.67-1.5 1.5v.68c-.15.03-.29.08-.42.12-.1.03-.2.07-.3.11h-.01c-.01 0-.01 0-.02.01-.23.09-.46.2-.68.31 0 0-.01 0-.01.01L18 14.68z"/></svg>
<div class="a" style="left:482px;top:568px;width:27px;height:15px;background:#88b917;border-radius:8px"></div>
<div class="t" style="left:195.5px;width:600px;text-align:center;top:570.53px;font-size:10px;color:#fff;font-weight:bold;">OK</div>
<div class="t" style="left:35px;width:600px;text-align:right;top:570.69px;font-size:11px;color:#555;font-weight:normal;">43m 31s</div>
<div class="t " style="left:644px;top:570.69px;font-size:11px;color:#555;font-weight:normal;">27/03/2018 15:50:01</div>
<div class="t " style="left:756px;top:570.69px;font-size:11px;color:#555;font-weight:normal;">1/3 (H)</div>
<div class="t " style="left:798px;top:570.69px;font-size:11px;color:#555;font-weight:normal;">OK - HTTP Statuscode 200 - Click to View Camera</div>
<div class="a" style="left:0px;top:654px;width:1238px;height:32px;background:#e6e6e6"></div>
<div class="t " style="left:11px;top:664.69px;font-size:11px;color:#555;font-weight:normal;">Generated in 0.215 seconds</div>
<div class="t " style="left:453px;top:664.69px;font-size:11px;color:#555;font-weight:normal;">Documentation</div>
<div class="t " style="left:541px;top:664.69px;font-size:11px;color:#555;font-weight:normal;">|</div>
<div class="t " style="left:556px;top:664.69px;font-size:11px;color:#555;font-weight:normal;">Centreon Support</div>
<div class="t " style="left:657px;top:664.69px;font-size:11px;color:#555;font-weight:normal;">|</div>
<div class="t " style="left:672px;top:664.69px;font-size:11px;color:#555;font-weight:normal;">Centreon</div>
<div class="t " style="left:731px;top:664.69px;font-size:11px;color:#555;font-weight:normal;">|</div>
<div class="t " style="left:746px;top:664.69px;font-size:11px;color:#555;font-weight:normal;">Github Project</div>
<div class="t " style="left:999px;top:664.69px;font-size:11px;color:#555;font-weight:normal;">Copyright &copy; 2005 - 2018</div>
<div class="a" style="left:1200px;top:644px;width:28px;height:28px;background:#58585a;border-radius:4px"></div>
<svg class="a" style="left:1200px;top:644px;" width="28" height="28" viewBox="0 0 28 28"><rect x="6" y="6" width="16" height="16" fill="#e4e4e4"/><g fill="#4c4c4e"><path d="M14 10.2 L17.8 14 L14 17.8 L10.2 14 Z"/><path d="M14 4.8 L17.8 8.6 L14 12.399999999999999 L10.2 8.6 Z"/><path d="M8.6 10.2 L12.399999999999999 14 L8.6 17.8 L4.8 14 Z"/><path d="M19.4 10.2 L23.2 14 L19.4 17.8 L15.599999999999998 14 Z"/><path d="M14 15.599999999999998 L17.8 19.4 L14 23.2 L10.2 19.4 Z"/></g></svg>
<svg class="a" style="left:1192px;top:642px;" width="26" height="28" viewBox="0 0 26 28"><path d="M2 13 L13 2 L24 13 L13 24 Z" fill="rgba(0,0,0,0.13)"/><path d="M7.5 14 L14 7.5 L15.5 9 L9 15.5 Z" fill="rgba(255,255,255,0.25)"/></svg>
<div class="a" style="left:0px;top:0px;width:1256px;height:687px;border:1px solid #888;border-top-color:#9a9a9a"></div>
</body></html>
